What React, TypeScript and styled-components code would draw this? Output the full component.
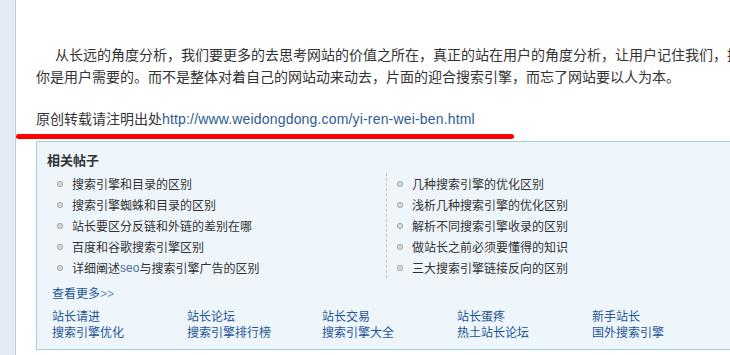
import React from "react";
import styled, { createGlobalStyle } from "styled-components";

const GlobalStyle = createGlobalStyle`
  html, body {
    margin: 0;
    padding: 0;
    overflow: hidden;
    background: #ffffff;
  }
  body {
    font-family: "Liberation Sans", "Noto Sans CJK SC", sans-serif;
    color: #333333;
  }
`;

const related = [
  ["搜索引擎和目录的区别", "几种搜索引擎的优化区别"],
  ["搜索引擎蜘蛛和目录的区别", "浅析几种搜索引擎的优化区别"],
  ["站长要区分反链和外链的差别在哪", "解析不同搜索引擎收录的区别"],
  ["百度和谷歌搜索引擎区别", "做站长之前必须要懂得的知识"],
  ["详细阐述seo与搜索引擎广告的区别", "三大搜索引擎链接反向的区别"],
];

const footerLinks = [
  ["站长请进", "搜索引擎优化"],
  ["站长论坛", "搜索引擎排行榜"],
  ["站长交易", "搜索引擎大全"],
  ["站长蛋疼", "热土站长论坛"],
  ["新手站长", "国外搜索引擎"],
];

// highlight the latin "seo" bit the way the old page did
const renderTitle = (title: string) => {
  const parts = title.split("seo");
  if (parts.length < 2) return title;
  return (
    <>
      {parts[0]}
      <Seo>seo</Seo>
      {parts[1]}
    </>
  );
};

const App = () => {
  return (
    <Page>
      <GlobalStyle />
      <SideStrip />
      <Main>
        <Paragraph $indent>
          从长远的角度分析，我们要更多的去思考网站的价值之所在，真正的站在用户的角度分析，让用户记住我们，提醒他们你是用户需要的。而不是整体对着自己的网站动来动去，片面的迎合搜索引擎，而忘了网站要以人为本。
        </Paragraph>
        <Paragraph>
          原创转载请注明出处
          <SourceLink href="#">http://www.weidongdong.com/yi-ren-wei-ben.html</SourceLink>
        </Paragraph>
        <Marker />
        <RelatedBox>
          <BoxTitle>相关帖子</BoxTitle>
          <Columns>
            {[0, 1].map((col) => (
              <Column key={col} $divided={col === 1}>
                {related.map((row) => (
                  <Item key={row[col]}>
                    <Bullet />
                    {renderTitle(row[col])}
                  </Item>
                ))}
              </Column>
            ))}
          </Columns>
          <MoreLink href="#">
            查看更多<Arrows>&gt;&gt;</Arrows>
          </MoreLink>
          <LinkGrid>
            {footerLinks.map((pair) => (
              <LinkCell key={pair[0]}>
                <BlueLink href="#">{pair[0]}</BlueLink>
                <BlueLink href="#">{pair[1]}</BlueLink>
              </LinkCell>
            ))}
          </LinkGrid>
        </RelatedBox>
      </Main>
    </Page>
  );
};

const Page = styled.div`
  display: flex;
  width: 820px;
  height: 355px;
`;

const SideStrip = styled.div`
  width: 15px;
  flex: none;
  background: #e5ebf2;
  border-right: 1px solid #b9cfe1;
`;

const Main = styled.div`
  flex: 1;
  padding: 44px 0 0 20px;
`;

const Paragraph = styled.p<{ $indent?: boolean }>`
  margin: 0 0 20px;
  width: 752px;
  font-size: 14px;
  line-height: 22px;
  color: #333333;
  text-indent: ${(p) => (p.$indent ? "19px" : "0")};

  &:last-of-type {
    margin-bottom: 0;
  }
`;

const SourceLink = styled.a`
  color: #2f5b93;
  letter-spacing: 0.17px;
  text-decoration: none;
`;

const Marker = styled.div`
  width: 498px;
  height: 5px;
  margin: 4px 0 2px -20px;
  background: #ff0000;
  border-radius: 3px;
`;

const RelatedBox = styled.div`
  width: 760px;
  border: 1px solid #9fcfdc;
  background: #eef6fc;
  padding: 8px 0 8px 10px;
`;

const BoxTitle = styled.div`
  font-size: 13px;
  font-weight: bold;
  line-height: 21px;
  color: #333333;
`;

const Columns = styled.div`
  display: flex;
  margin-top: 2px;
`;

const Column = styled.ul<{ $divided?: boolean }>`
  list-style: none;
  margin: 0;
  padding: 0;
  width: 339px;
  border-left: ${(p) => (p.$divided ? "1px dashed #c4c4c4" : "none")};
`;

const Item = styled.li`
  display: flex;
  align-items: center;
  height: 21px;
  font-size: 12px;
  color: #333333;
  padding-left: 10px;
`;

const Bullet = styled.span`
  width: 6px;
  height: 6px;
  border-radius: 50%;
  margin-right: 9px;
  background: radial-gradient(circle, #d8d8d8 0 35%, #a8a8a8 60%);
  flex: none;
`;

const Seo = styled.span`
  color: #4a6f9c;
`;

const MoreLink = styled.a`
  display: block;
  margin: 6px 0 0 5px;
  font-size: 12px;
  line-height: 20px;
  color: #1e5494;
  text-decoration: none;
`;

const Arrows = styled.span`
  color: #6c8fbf;
`;

const LinkGrid = styled.div`
  display: grid;
  grid-template-columns: repeat(5, 135px);
  margin: 5px 0 0 5px;
`;

const LinkCell = styled.div`
  display: flex;
  flex-direction: column;
`;

const BlueLink = styled.a`
  font-size: 12px;
  line-height: 16px;
  color: #1e5494;
  text-decoration: none;
`;

export default App;
